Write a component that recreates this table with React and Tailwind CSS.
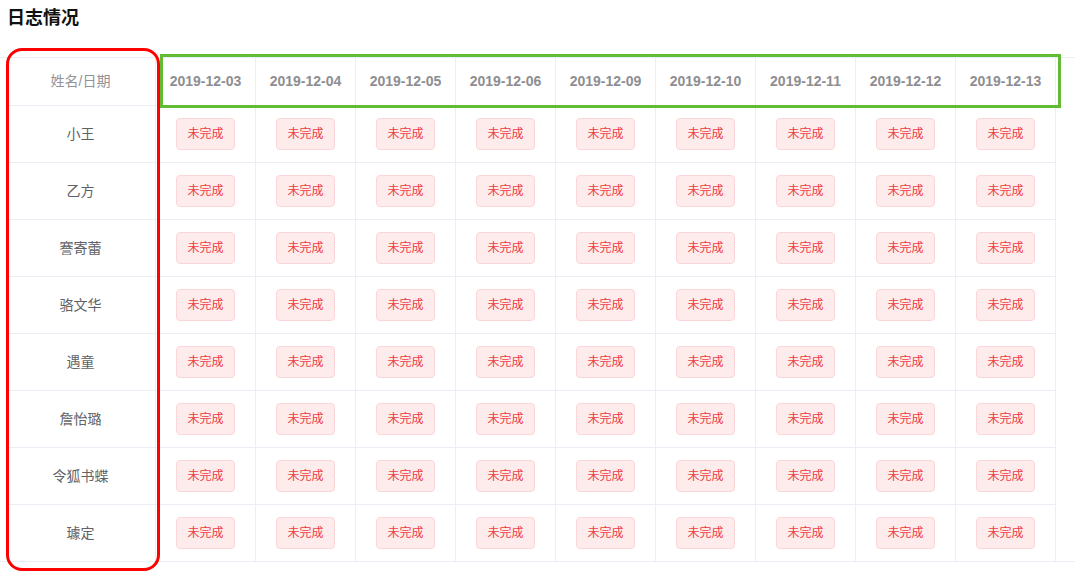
import React from "react";

const dates = [
  "2019-12-03",
  "2019-12-04",
  "2019-12-05",
  "2019-12-06",
  "2019-12-09",
  "2019-12-10",
  "2019-12-11",
  "2019-12-12",
  "2019-12-13",
];

const names = ["小王", "乙方", "謇寄蕾", "骆文华", "遇童", "詹怡璐", "令狐书蝶", "璩定"];

function Tag() {
  return (
    <span className="inline-flex items-center h-[32px] px-[10px] text-[12px] text-[#ee3b3f] bg-[#feeced] border border-[#fbd6d9] rounded-[4px]">
      未完成
    </span>
  );
}

export default function App() {
  return (
    <div
      className="relative w-[1075px] h-[578px] overflow-hidden bg-white"
      style={{ fontFamily: '"Liberation Sans", "Noto Sans CJK SC", sans-serif' }}
    >
      <h2 className="pl-[7px] pt-[7px] text-[18px] leading-[22px] font-bold text-[#111]">日志情况</h2>

      {/* table */}
      <div className="mt-[28px] pl-[6px] border-t border-b border-[#ebeef5]">
        {/* header */}
        <div className="flex h-[48px] w-[1050px] border-b border-[#ebeef5]">
          <div className="w-[150px] flex items-center justify-center border-r border-[#ebeef5] text-[14px] text-[#909399]">
            姓名/日期
          </div>
          {dates.map((d) => (
            <div
              key={d}
              className="w-[100px] flex items-center justify-center border-r border-[#ebeef5] text-[14px] font-bold text-[#8e8e92]"
            >
              {d}
            </div>
          ))}
        </div>

        {/* rows */}
        {names.map((n, i) => (
          <div
            key={n}
            className={
              i === names.length - 1
                ? "flex h-[56px] w-[1050px]"
                : "flex h-[57px] w-[1050px] border-b border-[#ebeef5]"
            }
          >
            <div className="w-[150px] flex items-center justify-center border-r border-[#ebeef5] text-[14px] text-[#606266]">
              {n}
            </div>
            {dates.map((d) => (
              <div key={d} className="w-[100px] flex items-center justify-center border-r border-[#ebeef5]">
                <Tag />
              </div>
            ))}
          </div>
        ))}
      </div>

      {/* annotation boxes */}
      <div className="absolute left-[6px] top-[48px] w-[154px] h-[523px] border-[3px] border-[#f00] rounded-[16px]" />
      <div className="absolute left-[160px] top-[54px] w-[901px] h-[54px] border-[3px] border-[#62bb35]" />
    </div>
  );
}
